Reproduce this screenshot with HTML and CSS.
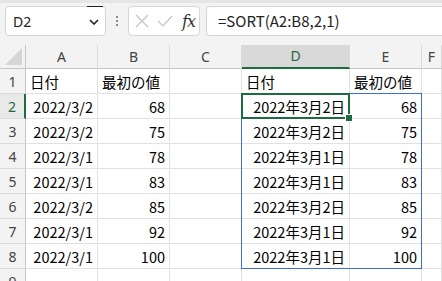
FILE: index.html
```html
<!DOCTYPE html>
<html lang="ja">
<head>
  <meta charset="UTF-8">
  <title>SORT</title>
  <link rel="stylesheet" href="styles.css">
</head>
<body>
  <!-- Formula bar -->
  <div class="toolbar">
    <div class="nameBox">
      <span class="nameText">D2</span>
      <svg class="chevron" width="10" height="6" viewBox="0 0 10 6"><path d="M1 1 L5 5 L9 1" fill="none" stroke="#222" stroke-width="1.6"/></svg>
      <span class="nameMark"></span>
    </div>
    <div class="dots"><i></i><i></i><i></i></div>
    <div class="fxButtons">
      <svg width="14" height="14" viewBox="0 0 14 14"><path d="M1 1 L13 13 M13 1 L1 13" stroke="#c4c4c4" stroke-width="1.2"/></svg>
      <svg width="16" height="12" viewBox="0 0 16 12"><path d="M1 6 L6 11 L15 1" fill="none" stroke="#c4c4c4" stroke-width="1.2"/></svg>
      <span class="fx">fx</span>
    </div>
    <div class="formula">=SORT(A2:B8,2,1)</div>
  </div>

  <!-- Sheet -->
  <div class="sheet">
    <div class="colHead corner">
      <svg width="17" height="17" viewBox="0 0 17 17"><polygon points="17,0 17,17 0,17" fill="#d6d6d6"/></svg>
    </div>
    <div class="colHead">A</div>
    <div class="colHead">B</div>
    <div class="colHead">C</div>
    <div class="colHead selected">D</div>
    <div class="colHead">E</div>
    <div class="colHead">F</div>

    <div class="rowHead">1</div>
    <div class="cell">日付</div>
    <div class="cell">最初の値</div>
    <div class="cell"></div>
    <div class="cell">日付</div>
    <div class="cell">最初の値</div>
    <div class="cell"></div>

    <div class="rowHead selected">2</div>
    <div class="cell num">2022/3/2</div>
    <div class="cell num">68</div>
    <div class="cell"></div>
    <div class="cell num current">
      2022年3月2日
      <!-- spill range and active cell -->
      <span class="spill"></span>
      <span class="active"><span class="handle"></span></span>
    </div>
    <div class="cell num">68</div>
    <div class="cell"></div>

    <div class="rowHead">3</div>
    <div class="cell num">2022/3/2</div>
    <div class="cell num">75</div>
    <div class="cell"></div>
    <div class="cell num">2022年3月2日</div>
    <div class="cell num">75</div>
    <div class="cell"></div>

    <div class="rowHead">4</div>
    <div class="cell num">2022/3/1</div>
    <div class="cell num">78</div>
    <div class="cell"></div>
    <div class="cell num">2022年3月1日</div>
    <div class="cell num">78</div>
    <div class="cell"></div>

    <div class="rowHead">5</div>
    <div class="cell num">2022/3/1</div>
    <div class="cell num">83</div>
    <div class="cell"></div>
    <div class="cell num">2022年3月1日</div>
    <div class="cell num">83</div>
    <div class="cell"></div>

    <div class="rowHead">6</div>
    <div class="cell num">2022/3/2</div>
    <div class="cell num">85</div>
    <div class="cell"></div>
    <div class="cell num">2022年3月2日</div>
    <div class="cell num">85</div>
    <div class="cell"></div>

    <div class="rowHead">7</div>
    <div class="cell num">2022/3/1</div>
    <div class="cell num">92</div>
    <div class="cell"></div>
    <div class="cell num">2022年3月1日</div>
    <div class="cell num">92</div>
    <div class="cell"></div>

    <div class="rowHead">8</div>
    <div class="cell num">2022/3/1</div>
    <div class="cell num">100</div>
    <div class="cell"></div>
    <div class="cell num">2022年3月1日</div>
    <div class="cell num">100</div>
    <div class="cell"></div>

    <div class="rowHead">9</div>
    <div class="cell"></div>
    <div class="cell"></div>
    <div class="cell"></div>
    <div class="cell"></div>
    <div class="cell"></div>
    <div class="cell"></div>
  </div>
</body>
</html>
```

FILE: styles.css
```css
body {
  margin: 0;
  height: 281px;
  background-color: #f3f3f3;
  font-family: "Noto Sans CJK JP", "Noto Sans", sans-serif;
  overflow: hidden;
}

/* Formula bar */
.toolbar {
  height: 45px;
  box-sizing: border-box;
  border-top: 3px solid #e6e6e6;
  padding: 3px 0 0 5px;
  display: flex;
  align-items: flex-start;
}

.nameBox {
  position: relative;
  width: 101px;
  height: 30px;
  box-sizing: border-box;
  background: #fff;
  border: 1px solid #d6d6d6;
  border-radius: 4px;
  display: flex;
  align-items: center;
  justify-content: space-between;
  padding: 0 6px 0 7px;
}

.nameText {
  font-family: "Noto Sans", sans-serif;
  font-size: 14px;
  color: #222;
}

.chevron {
  margin-top: 2px;
}

.nameMark {
  position: absolute;
  top: -1px;
  right: 2px;
  width: 16px;
  height: 1px;
  background: #222;
}

.dots {
  width: 22px;
  height: 30px;
  display: flex;
  flex-direction: column;
  align-items: center;
  justify-content: center;
  gap: 2px;
}

.dots i {
  width: 2px;
  height: 2px;
  background: #8a8a8a;
}

.fxButtons {
  width: 72px;
  height: 30px;
  box-sizing: border-box;
  background: #fff;
  border: 1px solid #d6d6d6;
  border-radius: 4px;
  display: flex;
  align-items: center;
  padding: 0 4px 0 6px;
  gap: 8px;
}

.fx {
  font-family: "DejaVu Serif", "Liberation Serif", serif;
  font-style: italic;
  font-size: 16px;
  color: #333;
  margin-left: 1px;
  letter-spacing: -1px;
}

.formula {
  flex: 1;
  margin-left: 6px;
  height: 30px;
  box-sizing: border-box;
  background: #fff;
  border: 1px solid #d6d6d6;
  border-right: none;
  border-radius: 4px 0 0 4px;
  padding: 0 0 0 11px;
  font-size: 15px;
  line-height: 28px;
  color: #222;
}

/* Sheet grid */
.sheet {
  display: grid;
  grid-template-columns: 26px 72px 72px 72px 108px 72px 1fr;
  grid-template-rows: 24px repeat(9, 25px);
  background: #fff;
}

.colHead {
  background: #f3f3f3;
  border-right: 1px solid #dadada;
  border-bottom: 1px solid #c6c6c6;
  font-family: "Noto Sans", sans-serif;
  font-size: 14px;
  color: #444;
  text-align: center;
  line-height: 23px;
}

.colHead.corner {
  border-right: 1px solid #c6c6c6;
  display: flex;
  align-items: flex-end;
  justify-content: flex-end;
  padding: 0 3px 3px 0;
}

.colHead.selected {
  background: #d9d9d9;
  color: #1e6b41;
  border-bottom: 2px solid #1e6b41;
  line-height: 22px;
}

.rowHead {
  background: #f3f3f3;
  border-right: 1px solid #c6c6c6;
  border-bottom: 1px solid #dadada;
  font-family: "Noto Sans", sans-serif;
  font-size: 14px;
  color: #444;
  text-align: center;
  line-height: 25px;
}

.rowHead.selected {
  background: #e9e9e9;
  color: #1e6b41;
  border-right: 2px solid #1e6b41;
}

.cell {
  border-right: 1px solid #e1e1e1;
  border-bottom: 1px solid #e1e1e1;
  font-size: 14.5px;
  line-height: 25px;
  color: #000;
  padding: 0 4px;
  white-space: nowrap;
}

.cell.num {
  text-align: right;
}

.cell.current {
  position: relative;
}

.spill {
  position: absolute;
  top: -1px;
  left: -1px;
  width: 181px;
  height: 176px;
  box-sizing: border-box;
  border: 1px solid #3a6fd0;
  pointer-events: none;
}

.active {
  position: absolute;
  top: -1px;
  left: -1px;
  right: -1px;
  bottom: -1px;
  border: 2px solid #1e6b41;
  pointer-events: none;
}

.handle {
  position: absolute;
  right: -5px;
  bottom: -5px;
  width: 6px;
  height: 6px;
  background: #1e6b41;
  border: 1px solid #fff;
}
```
